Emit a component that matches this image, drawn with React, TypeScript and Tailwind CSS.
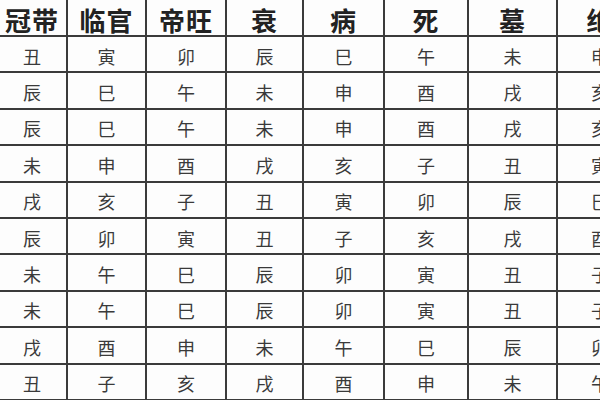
const headers = ['冠带', '临官', '帝旺', '衰', '病', '死', '墓', '绝']

const rows = [
  ['丑', '寅', '卯', '辰', '巳', '午', '未', '申'],
  ['辰', '巳', '午', '未', '申', '酉', '戌', '亥'],
  ['辰', '巳', '午', '未', '申', '酉', '戌', '亥'],
  ['未', '申', '酉', '戌', '亥', '子', '丑', '寅'],
  ['戌', '亥', '子', '丑', '寅', '卯', '辰', '巳'],
  ['辰', '卯', '寅', '丑', '子', '亥', '戌', '酉'],
  ['未', '午', '巳', '辰', '卯', '寅', '丑', '子'],
  ['未', '午', '巳', '辰', '卯', '寅', '丑', '子'],
  ['戌', '酉', '申', '未', '午', '巳', '辰', '卯'],
  ['丑', '子', '亥', '戌', '酉', '申', '未', '午'],
]

const font = { fontFamily: '"Noto Sans CJK SC", "Noto Sans", sans-serif' }

export default function App() {
  return (
    <div className="w-[600px] h-[400px] overflow-hidden bg-white" style={font}>
      <div className="ml-[-4px] mt-[-2px] w-[646px] grid grid-cols-[68px_77px_78px_75px_79px_82px_87px_84px] grid-rows-[35px_repeat(10,34.4px)] gap-[2px] p-[2px] bg-[#3b3b3b]">
        {headers.map((h) => (
          <div
            key={h}
            className="bg-[#fdfdfd] flex items-center justify-center pt-[5px] text-[26px] leading-none font-bold text-[#222] tracking-[1px]"
          >
            {h}
          </div>
        ))}
        {rows.map((row, i) =>
          row.map((c, j) => (
            <div
              key={`${i}-${j}`}
              className="bg-[#fdfdfd] flex items-center justify-center pt-[3px] text-[18px] leading-none text-[#3a3a3a]"
            >
              {c}
            </div>
          )),
        )}
      </div>
    </div>
  )
}
